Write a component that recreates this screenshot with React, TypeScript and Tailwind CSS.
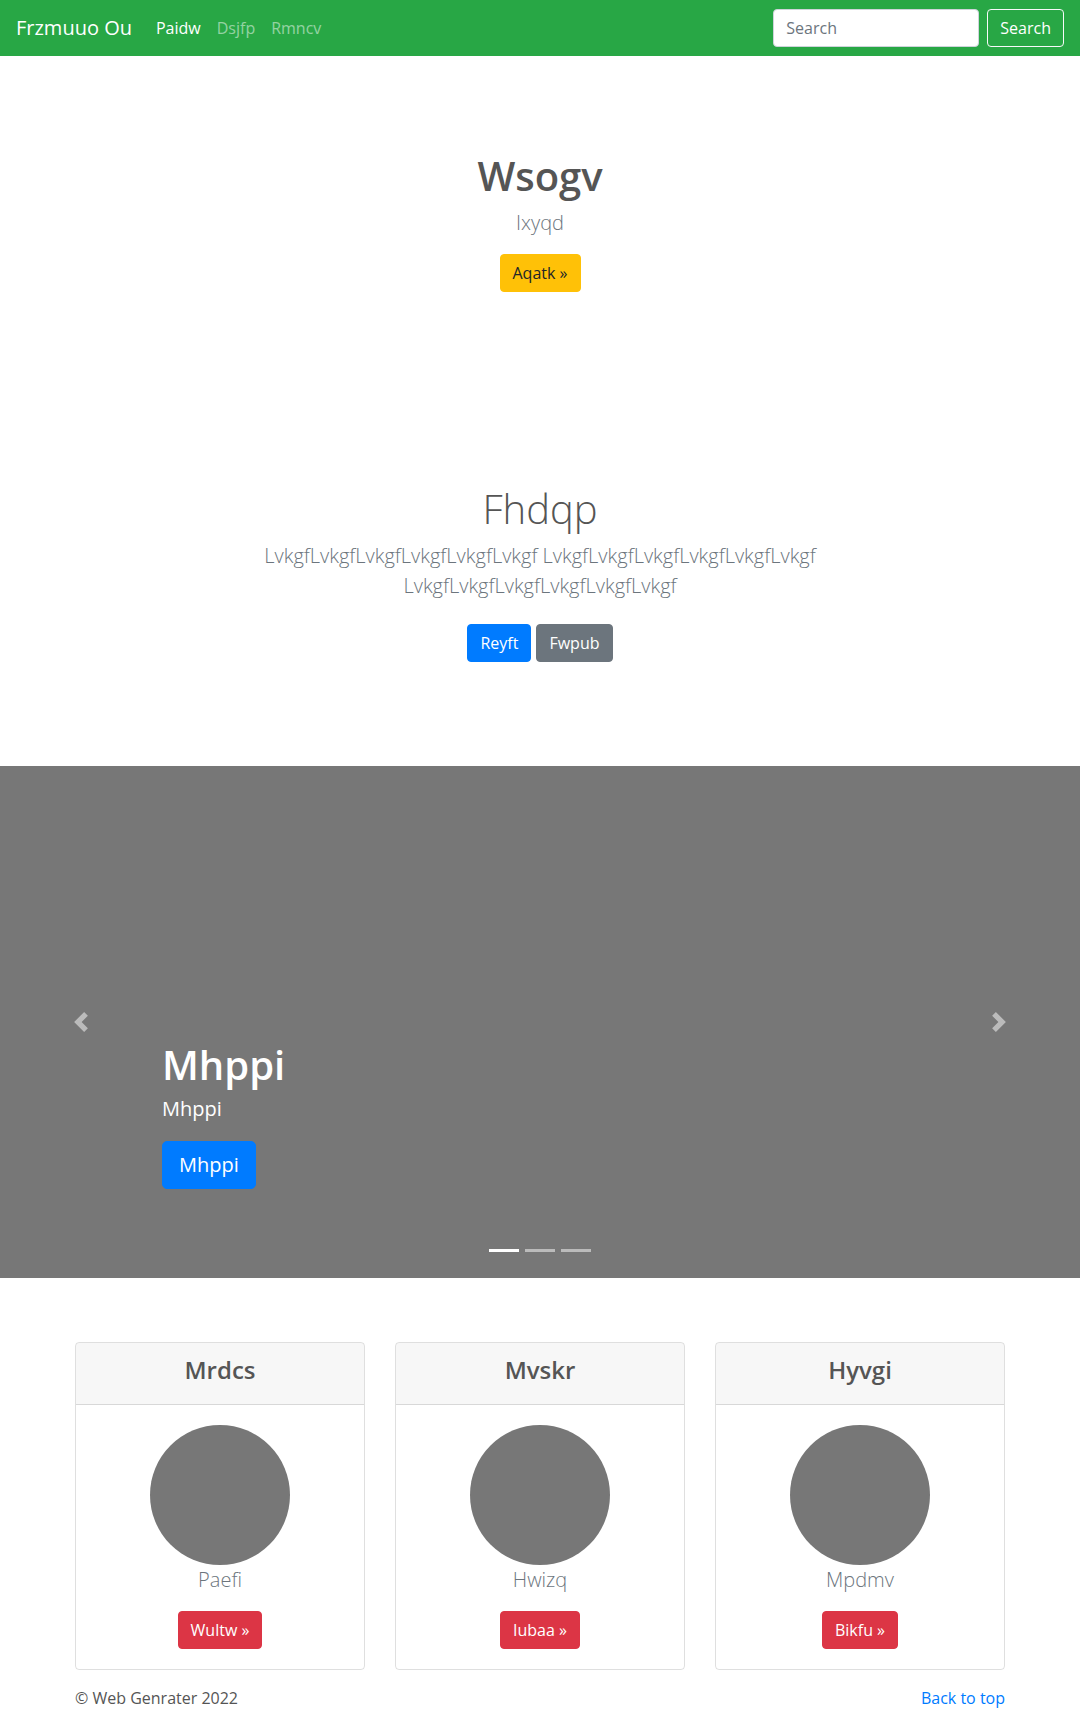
import React from "react";

const cards = [
  { title: "Mrdcs", name: "Paefi", btn: "Wultw »" },
  { title: "Mvskr", name: "Hwizq", btn: "Iubaa »" },
  { title: "Hyvgi", name: "Mpdmv", btn: "Bikfu »" },
];

export default function App() {
  return (
    <div className="font-['Open_Sans','Segoe_UI',sans-serif] text-[#555] bg-white">
      {/* NAVBAR */}
      <nav className="h-14 bg-[#28a745] px-4 flex items-center">
        <a className="text-[20px] leading-[30px] text-white mr-4">Frzmuuo Ou</a>
        <ul className="flex text-base leading-6">
          <li><a className="block px-2 text-white">Paidw</a></li>
          <li><a className="block px-2 text-white/50">Dsjfp</a></li>
          <li><a className="block px-2 text-white/50">Rmncv</a></li>
        </ul>
        <form className="ml-auto flex items-center">
          <input
            placeholder="Search"
            className="w-[206px] h-[38px] px-3 rounded-[4px] border border-[#ced4da] bg-white text-base text-[#495057] placeholder:text-[#6c757d] outline-none"
          />
          <button
            type="button"
            className="ml-2 h-[38px] px-3 rounded-[4px] border border-[#f8f9fa] text-white text-base"
          >
            Search
          </button>
        </form>
      </nav>

      {/* HERO 1 */}
      <section className="pt-[96px] pb-[96px] text-center">
        <h1 className="text-[40px] leading-[48px] font-semibold mb-2">Wsogv</h1>
        <p className="text-[20px] leading-[30px] font-light text-[#6c757d] mb-4">Ixyqd</p>
        <a className="inline-block bg-[#ffc107] border border-[#ffc107] text-[#212529] px-3 py-1.5 leading-6 rounded-[4px]">
          Aqatk »
        </a>
      </section>

      {/* HERO 2 */}
      <section className="pt-[97px] pb-[104px] text-center">
        <h1 className="text-[40px] leading-[48px] font-light mb-2">Fhdqp</h1>
        <p className="max-w-[610px] mx-auto text-[20px] leading-[30px] font-light text-[#6c757d] mb-[23px]">
          LvkgfLvkgfLvkgfLvkgfLvkgfLvkgf LvkgfLvkgfLvkgfLvkgfLvkgfLvkgf LvkgfLvkgfLvkgfLvkgfLvkgfLvkgf
        </p>
        <div className="flex justify-center gap-[5px]">
          <a className="bg-[#007bff] border border-[#007bff] text-white px-3 py-1.5 leading-6 rounded-[4px]">Reyft</a>
          <a className="bg-[#6c757d] border border-[#6c757d] text-white px-3 py-1.5 leading-6 rounded-[4px]">Fwpub</a>
        </div>
      </section>

      {/* CAROUSEL */}
      <section className="relative h-[512px] bg-[#777] overflow-hidden">
        <div className="h-full flex flex-col justify-end px-[15%] pb-[89px] text-white">
          <h1 className="text-[40px] leading-[48px] font-semibold mb-[5px]">Mhppi</h1>
          <p className="text-[20px] leading-[30px] mb-[17px]">Mhppi</p>
          <div>
            <a className="inline-block bg-[#007bff] border border-[#007bff] text-white text-[20px] leading-[30px] px-4 py-2 rounded-[5px]">
              Mhppi
            </a>
          </div>
        </div>
        <div className="absolute inset-y-0 left-0 w-[15%] flex items-center justify-center opacity-50">
          <svg width="20" height="20" viewBox="0 0 8 8" fill="#fff">
            <path d="M5.25 0l-4 4 4 4 1.5-1.5L4.25 4l2.5-2.5L5.25 0z" />
          </svg>
        </div>
        <div className="absolute inset-y-0 right-0 w-[15%] flex items-center justify-center opacity-50">
          <svg width="20" height="20" viewBox="0 0 8 8" fill="#fff">
            <path d="M2.75 0l-1.5 1.5L3.75 4l-2.5 2.5L2.75 8l4-4-4-4z" />
          </svg>
        </div>
        <div className="absolute bottom-[26px] left-0 right-0 flex justify-center gap-[6px]">
          <span className="w-[30px] h-[3px] bg-white" />
          <span className="w-[30px] h-[3px] bg-white/50" />
          <span className="w-[30px] h-[3px] bg-white/50" />
        </div>
      </section>

      {/* CARDS */}
      <section className="pt-[64px]">
        <div className="w-[930px] mx-auto grid grid-cols-3 gap-[30px]">
          {cards.map((c) => (
            <div key={c.title} className="border border-black/[0.125] rounded-[4px] overflow-hidden">
              <div className="bg-black/[0.03] border-b border-black/[0.125] px-5 pt-3 pb-3 text-center">
                <h4 className="text-[24px] leading-[29px] font-semibold mb-2">{c.title}</h4>
              </div>
              <div className="p-5 flex flex-col items-center text-center">
                <div className="w-[140px] h-[140px] rounded-full bg-[#777]" />
                <p className="text-[20px] leading-[30px] font-light text-[#6c757d] mb-4">{c.name}</p>
                <a className="bg-[#dc3545] border border-[#dc3545] text-white px-3 py-1.5 leading-6 rounded-[4px]">{c.btn}</a>
              </div>
            </div>
          ))}
        </div>
      </section>

      {/* FOOTER */}
      <footer className="w-[930px] mx-auto pt-4 flex justify-between leading-6">
        <p>© Web Genrater 2022</p>
        <a className="text-[#007bff]">Back to top</a>
      </footer>
    </div>
  );
}
